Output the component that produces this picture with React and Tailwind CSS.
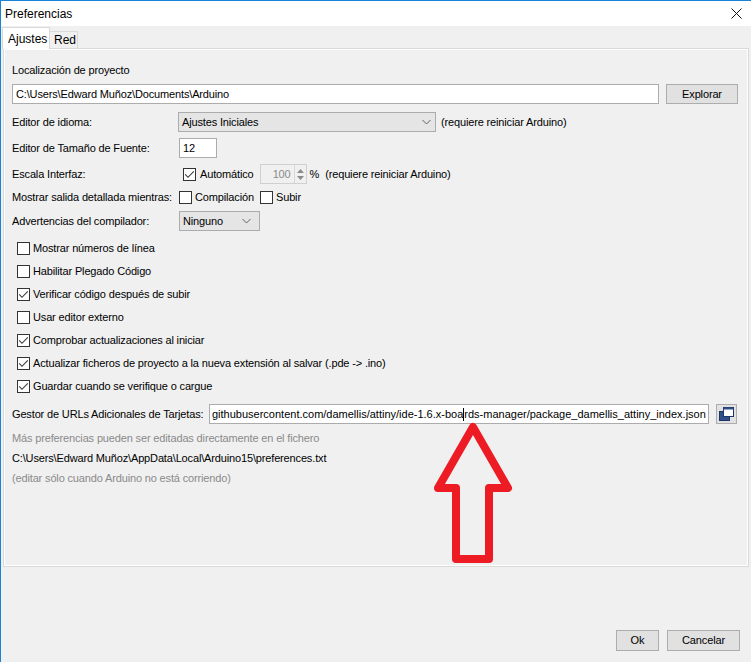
import React from "react";

function Box({ checked }) {
  return (
    <span className="w-[13px] h-[13px] border border-[#333333] bg-white flex items-center justify-center shrink-0">
      {checked && (
        <svg width="11" height="11" viewBox="0 0 11 11">
          <path d="M1.2 5.4 L4 8.3 L9.8 2.4" stroke="#3a3a3a" strokeWidth="1.1" fill="none" />
        </svg>
      )}
    </span>
  );
}

function Chevron() {
  return (
    <svg width="9" height="6" viewBox="0 0 9 6">
      <path d="M0.5 1 L4.5 5 L8.5 1" stroke="#606060" strokeWidth="1" fill="none" />
    </svg>
  );
}

function CheckRow({ checked, label }) {
  return (
    <div className="h-[23px] flex items-center pl-[5px] gap-[3px]">
      <Box checked={checked} />
      <span>{label}</span>
    </div>
  );
}

export default function App() {
  return (
    <div className="w-[751px] h-[662px] bg-[#f0f0f0] border-l border-t border-[#1883d7] relative overflow-hidden font-['Liberation_Sans',Arial,sans-serif] text-[11px] tracking-[-0.15px] text-black leading-none whitespace-nowrap">
      {/* Title bar */}
      <div className="h-[25px] bg-white flex items-center justify-between pl-[4px] pr-[9px] tracking-normal">
        <span className="text-[12px]">Preferencias</span>
        <svg width="11" height="11" viewBox="0 0 11 11">
          <path d="M0.5 0.5 L10.5 10.5 M10.5 0.5 L0.5 10.5" stroke="#111" strokeWidth="1" />
        </svg>
      </div>

      {/* Tabs */}
      <div className="h-[22px] flex items-end pl-[1px] tracking-normal">
        <div className="relative z-10 -mb-px h-[22px] w-[48px] bg-white border border-b-0 border-[#d9d9d9] flex items-center pl-[5px] text-[12px]">
          Ajustes
        </div>
        <div className="h-[17px] w-[28px] bg-[#f0f0f0] border border-l-0 border-b-0 border-[#d9d9d9] flex items-center pl-[4px] text-[12px]">
          Red
        </div>
      </div>

      {/* Panel */}
      <div className="ml-[2px] mr-[2px] h-[519px] border border-[#d9d9d9]">
        <div className="h-full border border-white pl-[7px] flex flex-col">
          <div className="mt-[12px] h-[16px] flex items-center">Localización de proyecto</div>

          <div className="mt-[6px] h-[20px] flex items-center">
            <div className="w-[647px] h-[20px] bg-white border border-[#acacac] flex items-center pl-[3px] shrink-0">
              C:\Users\Edward Muñoz\Documents\Arduino
            </div>
            <div className="ml-[7px] w-[72px] h-[20px] bg-[#e1e1e1] border border-[#adadad] flex items-center justify-center shrink-0">
              Explorar
            </div>
          </div>

          <div className="mt-[8px] h-[20px] flex items-center">
            <span className="w-[166px] shrink-0">Editor de idioma:</span>
            <div className="w-[258px] h-[20px] bg-[#e5e5e5] border border-[#acacac] flex items-center justify-between pl-[3px] pr-[4px] shrink-0">
              <span>Ajustes Iniciales</span>
              <Chevron />
            </div>
            <span className="ml-[5px]">(requiere reiniciar Arduino)</span>
          </div>

          <div className="mt-[6px] h-[20px] flex items-center">
            <span className="w-[167px] shrink-0">Editor de Tamaño de Fuente:</span>
            <div className="w-[38px] h-[20px] bg-white border border-[#acacac] flex items-center pl-[3px]">12</div>
          </div>

          <div className="mt-[6px] h-[20px] flex items-center">
            <span className="w-[171px] shrink-0">Escala Interfaz:</span>
            <Box checked />
            <span className="ml-[4px]">Automático</span>
            <div className="ml-[6px] w-[47px] h-[20px] bg-[#f0f0f0] border border-[#d0d0d0] flex items-center justify-end shrink-0">
              <span className="text-[#8a8a8a] mr-[3px]">100</span>
              <div className="w-[12px] h-[18px] border-l border-[#d8d8d8] flex flex-col items-center justify-center gap-[3px]">
                <svg width="7" height="4" viewBox="0 0 7 4"><path d="M0 4 L3.5 0 L7 4 Z" fill="#8a8a8a" /></svg>
                <svg width="7" height="4" viewBox="0 0 7 4"><path d="M0 0 L3.5 4 L7 0 Z" fill="#8a8a8a" /></svg>
              </div>
            </div>
            <span className="ml-[3px]">%</span>
            <span className="ml-[6px]">(requiere reiniciar Arduino)</span>
          </div>

          <div className="mt-[3px] h-[20px] flex items-center">
            <span className="w-[167px] shrink-0">Mostrar salida detallada mientras:</span>
            <Box />
            <span className="ml-[3px] w-[65px] shrink-0">Compilación</span>
            <Box />
            <span className="ml-[3px]">Subir</span>
          </div>

          <div className="mt-[4px] h-[20px] flex items-center">
            <span className="w-[167px] shrink-0">Advertencias del compilador:</span>
            <div className="w-[81px] h-[20px] bg-[#e5e5e5] border border-[#acacac] flex items-center justify-between pl-[3px] pr-[8px]">
              <span>Ninguno</span>
              <Chevron />
            </div>
          </div>

          <div className="mt-[6px] flex flex-col">
            <CheckRow label="Mostrar números de línea" />
            <CheckRow label="Habilitar Plegado Código" />
            <CheckRow checked label="Verificar código después de subir" />
            <CheckRow label="Usar editor externo" />
            <CheckRow checked label="Comprobar actualizaciones al iniciar" />
            <CheckRow checked label="Actualizar ficheros de proyecto a la nueva extensión al salvar (.pde -> .ino)" />
            <CheckRow checked label="Guardar cuando se verifique o cargue" />
          </div>

          <div className="mt-[6px] h-[20px] flex items-center">
            <span className="w-[197px] shrink-0">Gestor de URLs Adicionales de Tarjetas:</span>
            <div className="w-[500px] h-[20px] bg-white border border-[#acacac] flex items-center overflow-hidden pl-[2px] shrink-0 tracking-normal">
              <span className="shrink-0 flex items-center">
                githubusercontent.com/damellis/attiny/ide-1.6.x-boa
                <span className="inline-block w-px h-[13px] bg-black" />
                rds-manager/package_damellis_attiny_index.json
              </span>
            </div>
            <div className="ml-[7px] w-[21px] h-[20px] bg-[#e1e1e1] border border-[#adadad] flex items-center justify-center shrink-0">
              <svg width="15" height="14" viewBox="0 0 15 14">
                <rect x="0.5" y="4.5" width="10" height="9" fill="#2f4f8a" stroke="#1e3566" />
                <rect x="4.5" y="0.5" width="10" height="9" fill="#ffffff" stroke="#1e3566" />
                <rect x="4.5" y="0.5" width="10" height="2" fill="#2f4f8a" />
              </svg>
            </div>
          </div>

          <div className="mt-[4px] h-[20px] flex items-center text-[#8a8a8a]">
            Más preferencias pueden ser editadas directamente en el fichero
          </div>
          <div className="h-[20px] flex items-center">
            C:\Users\Edward Muñoz\AppData\Local\Arduino15\preferences.txt
          </div>
          <div className="h-[20px] flex items-center text-[#8a8a8a]">
            (editar sólo cuando Arduino no está corriendo)
          </div>
        </div>
      </div>

      {/* Buttons */}
      <div className="mt-[63px] flex justify-end pr-[11px] gap-[8px]">
        <div className="w-[43px] h-[21px] bg-[#e1e1e1] border border-[#adadad] flex items-center justify-center">Ok</div>
        <div className="w-[73px] h-[21px] bg-[#e1e1e1] border border-[#adadad] flex items-center justify-center">Cancelar</div>
      </div>

      {/* Red arrow annotation */}
      <svg className="absolute left-[-1px] top-[-1px] pointer-events-none" width="751" height="662" viewBox="0 0 751 662">
        <polygon
          points="473,427 508,488 489,488 489,559 456,559 456,488 438,488"
          fill="none"
          stroke="#ed1c24"
          strokeWidth="8"
          strokeLinejoin="round"
        />
      </svg>
    </div>
  );
}
